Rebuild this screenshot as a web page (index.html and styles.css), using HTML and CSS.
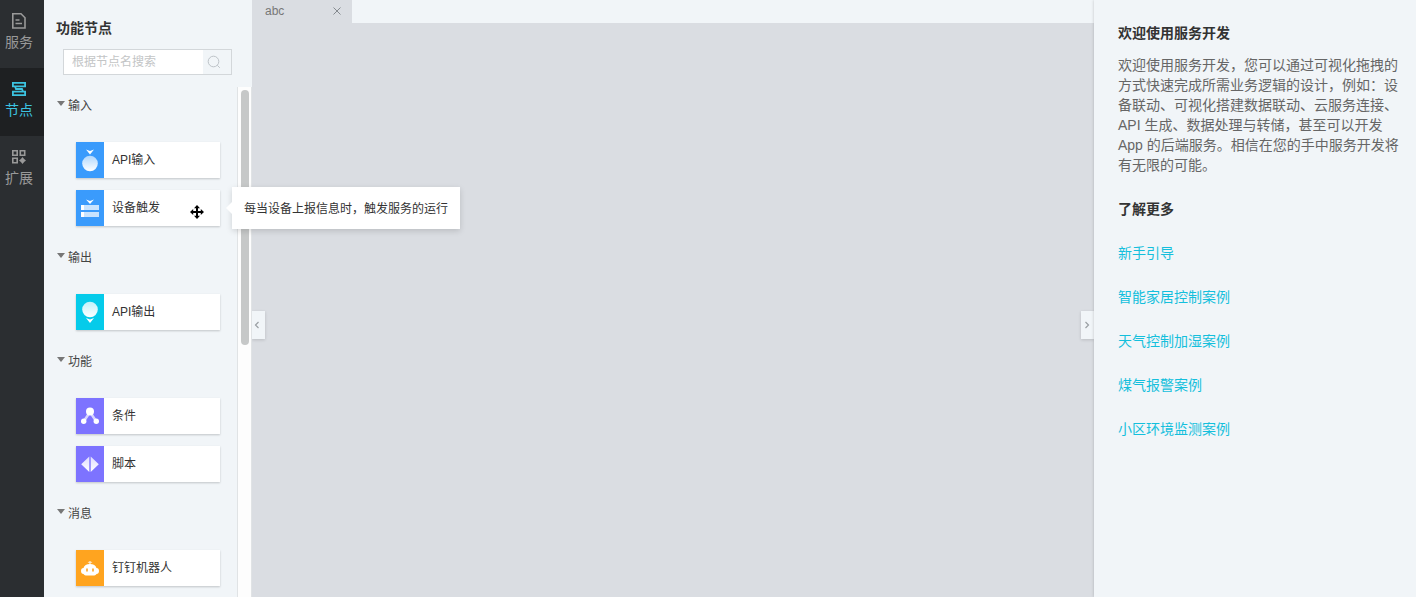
FILE: index.html
```
<!DOCTYPE html>
<html lang="zh-CN">
<head>
  <meta charset="UTF-8">
  <title>服务开发</title>
  <link rel="stylesheet" href="styles.css">
</head>
<body>
  <div class="app">
    <nav class="nav">
      <a class="nav-item" href="#service">
        <svg width="16" height="18" viewBox="0 0 16 18" fill="none" stroke="currentColor" stroke-width="1.6">
          <path d="M1.800 1.800H10l4 4V16H1.800z"/>
          <path d="M4.500 8h4M4.500 11.500h6.500"/>
        </svg>
        <span>服务</span>
      </a>
      <a class="nav-item active" href="#node">
        <svg width="16" height="18" viewBox="0 0 16 18" fill="none" stroke="currentColor" stroke-width="1.800">
          <path d="M1.900 2.900h12.200v3.400H1.900zM1.900 11.700h12.200v3.400H1.900z"/>
          <path d="M4 6.300l1 2.700h6l1 2.700"/>
        </svg>
        <span>节点</span>
      </a>
      <a class="nav-item" href="#extend">
        <svg width="16" height="18" viewBox="0 0 16 18" fill="none" stroke="currentColor" stroke-width="1.6">
          <path d="M1.800 2.800h4.400v4.400H1.800zM9.300 2.800h4.400v4.400H9.300zM1.800 10.300h4.400v4.400H1.800z"/>
          <path d="M11.500 9l1.600 1.900 1.900 1.600-1.900 1.600-1.600 1.900-1.600-1.900L8 12.500l1.900-1.600z" fill="currentColor" stroke="none"/>
        </svg>
        <span>扩展</span>
      </a>
    </nav>

    <aside class="panel">
      <h2 class="panel-title">功能节点</h2>
      <form class="search">
        <input class="search-input" type="text" placeholder="根据节点名搜索" aria-label="根据节点名搜索">
        <button class="search-btn" type="button" aria-label="搜索">
          <svg width="14" height="14" viewBox="0 0 14 14" fill="none" stroke="#bdc3c8">
            <circle cx="6.500" cy="6.500" r="5.300"/>
            <path d="M10.300 10.300l2.500 2.500"/>
          </svg>
        </button>
      </form>

      <div class="panel-body">
        <div class="groups">
          <section class="group">
            <button class="group-title" type="button">输入</button>
            <ul class="cards">
              <li class="card">
                <span class="card-icon blue">
                  <svg width="20" height="24" viewBox="0 0 20 24">
                    <defs>
                      <linearGradient id="fade" x1="0" y1="0" x2="0" y2="1">
                        <stop offset="0" stop-color="#fff" stop-opacity=".6"/>
                        <stop offset="1" stop-color="#fff"/>
                      </linearGradient>
                    </defs>
                    <path d="M6 1.500l4 1.500 4-1.500-4 5z" fill="#fff"/>
                    <circle cx="10" cy="15.500" r="7.800" fill="url(#fade)"/>
                  </svg>
                </span>
                <span>API输入</span>
              </li>
              <li class="card">
                <span class="card-icon blue">
                  <svg width="20" height="24" viewBox="0 0 20 24">
                    <path d="M6 3.500l4 1.500 4-1.500-4 4.500z" fill="#fff"/>
                    <path d="M1 9h18v5H1zM1 16h18v5H1z" fill="#fff" opacity=".72"/>
                    <path d="M1 9h3v5H1zM1 16h3v5H1z" fill="#fff"/>
                  </svg>
                </span>
                <span>设备触发</span>
                <svg class="cursor" width="16" height="16" viewBox="0 0 16 16">
                  <path d="M8 1l3 3.200H9V7h2.800V5L15 8l-3.200 3V9H9v2.800h2L8 15l-3-3.200h2V9H4.200v2L1 8l3.200-3v2H7V4.200H5z" fill="#000"/>
                </svg>
                <div class="tooltip" role="tooltip">每当设备上报信息时，触发服务的运行</div>
              </li>
            </ul>
          </section>

          <section class="group">
            <button class="group-title" type="button">输出</button>
            <ul class="cards">
              <li class="card">
                <span class="card-icon cyan">
                  <svg width="20" height="24" viewBox="0 0 20 24">
                    <defs>
                      <linearGradient id="drop" x1="0" y1="0" x2="0" y2="1">
                        <stop offset="0" stop-color="#fff" stop-opacity=".75"/>
                        <stop offset="1" stop-color="#fff"/>
                      </linearGradient>
                    </defs>
                    <circle cx="10" cy="9.500" r="7.800" fill="url(#drop)"/>
                    <path d="M6 18l4 1.500 4-1.500-4 5z" fill="#fff"/>
                  </svg>
                </span>
                <span>API输出</span>
              </li>
            </ul>
          </section>

          <section class="group">
            <button class="group-title" type="button">功能</button>
            <ul class="cards">
              <li class="card">
                <span class="card-icon purple">
                  <svg width="20" height="24" viewBox="0 0 20 24">
                    <path d="M4 17l6-9 6 9" fill="none" stroke="#fff" stroke-width="2.500" opacity=".7"/>
                    <circle cx="10" cy="7.500" r="4" fill="#fff"/>
                    <circle cx="3.700" cy="17.200" r="2.700" fill="#fff"/>
                    <circle cx="16.300" cy="17.200" r="2.700" fill="#fff"/>
                  </svg>
                </span>
                <span>条件</span>
              </li>
              <li class="card">
                <span class="card-icon purple">
                  <svg width="20" height="24" viewBox="0 0 20 24">
                    <path d="M9.300 4.500v15.500L1.200 12.300zM10.700 4.500v15.500l8.100-7.700z" fill="url(#drop)"/>
                  </svg>
                </span>
                <span>脚本</span>
              </li>
            </ul>
          </section>

          <section class="group">
            <button class="group-title" type="button">消息</button>
            <ul class="cards">
              <li class="card">
                <span class="card-icon orange">
                  <svg width="20" height="24" viewBox="0 0 20 24">
                    <path d="M7.500 6.500L10 5l2.500 1.500-1.800.5V9H9.300V7z" fill="#fff" opacity=".75"/>
                    <path fill-rule="evenodd" d="M3.500 12c.8-2.600 3-4 6.500-4s5.700 1.400 6.500 4c1.700 0 2.500 1 2.500 3s-1 3-2.500 3c-.8 1-1.800 1.500-3.500 1.500H7c-1.700 0-2.700-.5-3.500-1.500C2 18 1 17 1 15s.8-3 2.500-3zM6.200 12.500v3h1.600v-3zM12.200 12.500v3h1.600v-3z" fill="#fff"/>
                  </svg>
                </span>
                <span>钉钉机器人</span>
              </li>
            </ul>
          </section>
        </div>
        <div class="scrollbar"><div class="thumb"></div></div>
      </div>
    </aside>

    <main class="main">
      <div class="tabs">
        <div class="tab">
          <span>abc</span>
          <button class="tab-close" type="button" aria-label="关闭">
            <svg width="8" height="8" viewBox="0 0 8 8" stroke="#858a8f" fill="none">
              <path d="M.5.5l7 7M7.500.5l-7 7"/>
            </svg>
          </button>
        </div>
      </div>
      <div class="canvas"></div>
      <button class="fold fold-left" type="button" aria-label="收起左侧">
        <svg width="6" height="8" viewBox="0 0 6 8" stroke="#9a9fa3" stroke-width="1.200" fill="none"><path d="M4.500 1l-3 3 3 3"/></svg>
      </button>
      <button class="fold fold-right" type="button" aria-label="收起右侧">
        <svg width="6" height="8" viewBox="0 0 6 8" stroke="#9a9fa3" stroke-width="1.200" fill="none"><path d="M1.500 1l3 3-3 3"/></svg>
      </button>
    </main>

    <aside class="help">
      <h3>欢迎使用服务开发</h3>
      <p>欢迎使用服务开发，您可以通过可视化拖拽的方式快速完成所需业务逻辑的设计，例如：设备联动、可视化搭建数据联动、云服务连接、API 生成、数据处理与转储，甚至可以开发 App 的后端服务。相信在您的手中服务开发将有无限的可能。</p>
      <h3>了解更多</h3>
      <ul class="links">
        <li><a href="#guide">新手引导</a></li>
        <li><a href="#home">智能家居控制案例</a></li>
        <li><a href="#weather">天气控制加湿案例</a></li>
        <li><a href="#gas">煤气报警案例</a></li>
        <li><a href="#area">小区环境监测案例</a></li>
      </ul>
    </aside>
  </div>
</body>
</html>
```
FILE: styles.css
```
* {
  box-sizing: border-box;
}
body {
  margin: 0;
  overflow: hidden;
  font-family: "Liberation Sans", "Noto Sans CJK SC", sans-serif;
  font-size: 12px;
  line-height: 20px;
  color: #333;
}
ul {
  list-style: none;
  margin: 0;
  padding: 0;
}
a {
  text-decoration: none;
}
button, input {
  font: inherit;
  border: none;
  padding: 0;
}
button {
  background: none;
  cursor: pointer;
}
svg {
  display: block;
}
.app {
  display: flex;
  height: 100vh;
}

/* left navigation */
.nav {
  width: 44px;
  flex: none;
  background: #2b2e31;
}
.nav-item {
  display: flex;
  flex-direction: column;
  align-items: center;
  gap: 2px;
  height: 68px;
  padding: 12px 6px 0 0;
  font-size: 14px;
  color: #999;
}
.nav-item.active {
  background: #1e2022;
  color: #3cc3e0;
}

/* node panel */
.panel {
  display: flex;
  flex-direction: column;
  flex: none;
  width: 208px;
  background: #f1f5f8;
  position: relative;
  z-index: 1;
}
.panel-title {
  margin: 18px 12px 11px;
  font-size: 14px;
}
.search {
  display: flex;
  height: 26px;
  margin: 0 20px 12px 19px;
  border: 1px solid #d3d7da;
}
.search-input {
  flex: 1;
  min-width: 0;
  padding: 0 8px;
  background: #fff;
}
.search-input::placeholder {
  color: #c3c5c6;
}
.search-btn {
  width: 28px;
  padding-left: 4px;
}
.panel-body {
  display: flex;
  flex: 1;
  min-height: 0;
}
.groups {
  flex: 1;
  padding: 9px 17px 0 12px;
}
.group {
  margin-bottom: 22px;
}
.group-title {
  display: flex;
  gap: 3px;
  color: #444;
  margin-bottom: 26px;
  padding-left: 1px;
}
.group-title::before {
  content: "";
  border: 4px solid transparent;
  border-top: 5px solid #777;
  border-bottom: 0;
  margin-top: 5px;
  height: 0;
}
.cards {
  display: flex;
  flex-direction: column;
  gap: 12px;
  padding-left: 20px;
}
.card {
  display: flex;
  align-items: center;
  gap: 8px;
  height: 36px;
  background: #fff;
  box-shadow: 0 1px 2px rgba(0, 0, 0, .2);
  position: relative;
}
.card-icon {
  display: flex;
  align-items: center;
  justify-content: center;
  width: 28px;
  height: 36px;
}
.blue {
  background: #3a9bfc;
}
.cyan {
  background: #05cbea;
}
.purple {
  background: #7d73ff;
}
.orange {
  background: #ffa41f;
}
.cursor {
  position: absolute;
  right: 15px;
  top: 14px;
}
.tooltip {
  position: absolute;
  left: 100%;
  top: -3px;
  margin-left: 12px;
  padding: 12px 12px 10px;
  background: #fff;
  white-space: nowrap;
  box-shadow: 0 2px 6px rgba(0, 0, 0, .15);
}
.tooltip::before {
  content: "";
  position: absolute;
  left: -6px;
  top: 15px;
  border: 6px solid transparent;
  border-left: 0;
  border-right-color: #fff;
}
.scrollbar {
  width: 15px;
  padding: 3px;
  background: #fdfdfd;
  border-left: 1px solid #e0e3e5;
  border-right: 1px solid #e0e3e5;
}
.thumb {
  width: 8px;
  height: 255px;
  border-radius: 4px;
  background: #c6c8c8;
}

/* canvas */
.main {
  display: flex;
  flex-direction: column;
  flex: 1;
  min-width: 0;
  position: relative;
}
.tabs {
  height: 23px;
  background: #f1f5f8;
}
.tab {
  display: flex;
  align-items: center;
  justify-content: space-between;
  width: 100px;
  height: 23px;
  padding: 0 11px 2px 13px;
  background: #dadde2;
  color: #777;
}
.canvas {
  flex: 1;
  background: #dadde2;
}
.fold {
  display: flex;
  align-items: center;
  justify-content: center;
  position: absolute;
  top: 311px;
  width: 13px;
  height: 28px;
  background: #f1f5f8;
  box-shadow: 0 1px 3px rgba(0, 0, 0, .15);
}
.fold-left {
  left: 0;
  padding-right: 3px;
}
.fold-right {
  right: 0;
  padding-right: 2px;
}

/* help */
.help {
  flex: none;
  width: 322px;
  padding: 23px 16px 0 24px;
  background: #f1f5f8;
  box-shadow: 0 0 3px rgba(0, 0, 0, .2);
  position: relative;
  font-size: 14px;
  color: #666;
}
.help h3 {
  margin: 0 0 12px;
  font-size: 14px;
  color: #333;
}
.help p {
  margin: 0 0 24px;
}
.links {
  display: flex;
  flex-direction: column;
  gap: 24px;
  padding-top: 12px;
}
.links a {
  color: #14bfdc;
}
```
